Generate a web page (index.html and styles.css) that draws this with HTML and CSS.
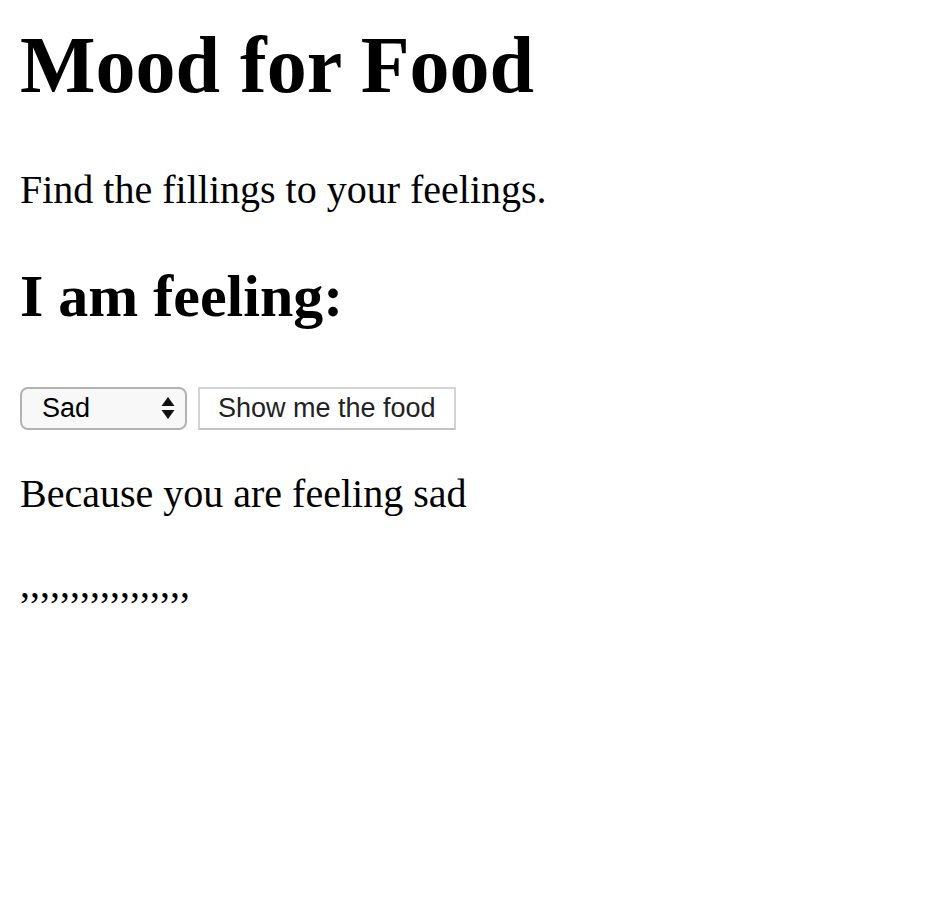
FILE: index.html
```html
<!DOCTYPE html>
<html lang="en">
<head>
<meta charset="utf-8">
<title>Mood for Food</title>
<link rel="stylesheet" href="styles.css">
</head>
<body>
<h1 class="title">Mood for Food</h1>
<p class="text">Find the fillings to your feelings.</p>
<h2 class="subtitle">I am feeling:</h2>
<div class="controls">
  <span class="select-wrap">
    <select class="mood">
      <option>Sad</option>
      <option>Happy</option>
      <option>Angry</option>
    </select>
    <svg class="arrows" width="14" height="22" viewBox="0 0 14 22" aria-hidden="true">
      <path d="M7 0 L13.5 9 L0.5 9 Z" fill="#111"/>
      <path d="M0.5 13 L13.5 13 L7 22 Z" fill="#111"/>
    </svg>
  </span>
  <button class="show" type="button">Show me the food</button>
</div>
<p class="text">Because you are feeling sad</p>
<p class="text commas">,,,,,,,,,,,,,,,,,</p>
</body>
</html>
```
FILE: styles.css
```css
html, body {
  background: #fff;
}
body {
  margin: 20px;
  font-family: "Liberation Serif", "Times New Roman", serif;
  color: #000;
}
.title {
  font-size: 80px;
  font-weight: bold;
  margin: 0 0 54.6px;
}
.text {
  font-size: 40px;
  margin: 40px 0;
}
.commas {
  padding-top: 3px;
}
.subtitle {
  font-size: 60px;
  font-weight: bold;
  margin: 49.8px 0;
}
.controls {
  display: flex;
  align-items: center;
  gap: 11px;
  margin-top: 55.5px;
}
.select-wrap {
  position: relative;
  display: inline-block;
}
.mood {
  appearance: none;
  -webkit-appearance: none;
  box-sizing: border-box;
  width: 167px;
  height: 43px;
  margin: 0;
  padding: 0 0 0 20px;
  border: 2px solid #b3b3b3;
  border-radius: 8px;
  background: #f8f8f8;
  font-family: "Liberation Sans", Arial, sans-serif;
  font-size: 27px;
  color: #000;
  outline: none;
}
.arrows {
  position: absolute;
  right: 12px;
  top: 10px;
  pointer-events: none;
}
.show {
  box-sizing: border-box;
  height: 43px;
  margin: 0;
  padding: 0 18px;
  border: 2px solid #d4d4d4;
  border-bottom-color: #c2c2c2;
  border-radius: 0;
  background: #fff;
  font-family: "Liberation Sans", Arial, sans-serif;
  font-size: 27px;
  color: #222;
}
```
